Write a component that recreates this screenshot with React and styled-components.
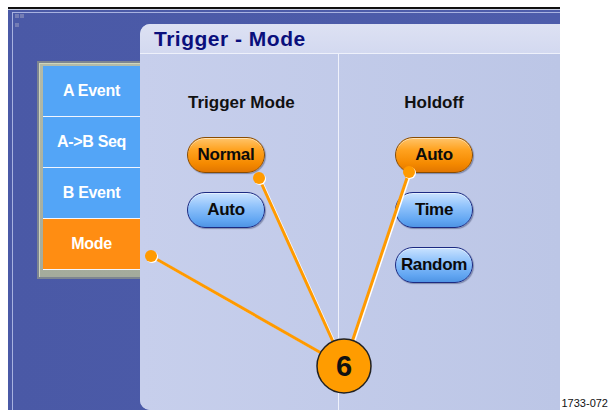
import React from 'react';
import styled, { createGlobalStyle } from 'styled-components';

const GlobalStyle = createGlobalStyle`
    html, body {
        margin: 0;
        padding: 0;
        background: #ffffff;
    }
    body {
        font-family: "Liberation Sans", Arial, sans-serif;
    }
`;

const Page = styled.div`
    position: relative;
    width: 610px;
    height: 410px;
    overflow: hidden;
    background: #ffffff;
    display: flex;
    padding: 7px 0 0 8px;
    box-sizing: border-box;
`;

const Screen = styled.div`
    width: 552px;
    height: 403px;
    box-sizing: border-box;
    border-top: 2px solid #111111;
    background: #4b5ba9;
    display: flex;
    flex-direction: column;
`;

const ScreenInner = styled.div`
    flex: 1;
    display: flex;
    flex-direction: column;
    border-top: 1px solid #c9cee0;
    padding: 2px 0 0 4px;
    background: linear-gradient(90deg, #4a59a6 0%, #4d5cab 100%);
`;

const Frame = styled.div`
    flex: 1;
    display: flex;
    align-items: stretch;
    border-left: 1px solid #a8b2e0;
    border-top: 1px solid #a8b2e0;
`;

const LeftArea = styled.div`
    width: 127px;
    display: flex;
    flex-direction: column;
    align-items: flex-start;
    padding: 1px 0 0 2px;
    box-sizing: border-box;
`;

const GridIcon = styled.div`
    display: grid;
    grid-template-columns: 4px 4px;
    grid-template-rows: 4px 4px;
    column-gap: 1px;
    row-gap: 5px;

    span {
        background: #747db4;
    }
`;

const MenuFrame = styled.div`
    margin: 34px 0 0 22px;
    width: 103px;
    box-sizing: border-box;
    padding: 3px 0 8px 4px;
    border: 2px solid #7d8591;
    border-right: none;
    background: linear-gradient(180deg, #b3baa8 0%, #a4ab9c 100%);
    box-shadow: inset 1px 1px 0 #d0d6bc;
    display: flex;
    flex-direction: column;
    gap: 1px;
`;

const MenuButton = styled.div`
    height: 50px;
    display: flex;
    align-items: center;
    justify-content: center;
    background: ${p => (p.$active ? '#ff8d12' : '#53a5f7')};
    color: #ffffff;
    font-weight: 700;
    font-size: 16px;
    letter-spacing: -0.3px;
    box-shadow: 0 1px 0 #f2f6ff;
`;

const Panel = styled.div`
    flex: 1;
    margin-top: 11px;
    border-radius: 10px 0 0 10px;
    overflow: hidden;
    display: flex;
    flex-direction: column;
    background: #c2cbe9;
`;

const PanelHeader = styled.div`
    height: 29px;
    padding-left: 14px;
    display: flex;
    align-items: center;
    background: linear-gradient(180deg, #dde1f3 0%, #d3d9f0 100%);
    border-bottom: 1px solid #eef1fb;
`;

const PanelTitle = styled.span`
    font-size: 21px;
    font-weight: 700;
    color: #0a0f7c;
    letter-spacing: 0.5px;
`;

const PanelBody = styled.div`
    flex: 1;
    display: flex;
    background: linear-gradient(90deg, #c7cfec 0%, #bcc6e6 100%);
`;

const Column = styled.div`
    width: ${p => p.$width}px;
    box-sizing: border-box;
    padding: 39px 0 0 ${p => p.$pad}px;
    border-right: ${p => (p.$divider ? '1px solid #f0f2fb' : 'none')};
    display: flex;
    flex-direction: column;
    align-items: flex-start;
`;

const Group = styled.div`
    display: flex;
    flex-direction: column;
    align-items: ${p => (p.$center ? 'center' : 'flex-start')};
    gap: 19px;
`;

const GroupLabel = styled.div`
    font-size: 17px;
    line-height: 20px;
    font-weight: 700;
    color: #111111;
    margin: 0 0 5px ${p => p.$shift || 0}px;
`;

const Pill = styled.div`
    width: 78px;
    height: 36px;
    box-sizing: border-box;
    border-radius: 18px;
    display: flex;
    align-items: center;
    justify-content: center;
    font-size: 17px;
    font-weight: 700;
    color: #0b0b0b;
    letter-spacing: -0.3px;
    border: 1.5px solid ${p => (p.$on ? '#8a4c00' : '#1c2a82')};
    background: ${p =>
        p.$on
            ? 'linear-gradient(180deg, #ffc46a 0%, #ffa21f 35%, #f58a00 75%, #e27600 100%)'
            : 'linear-gradient(180deg, #c9e2ff 0%, #8fc2fb 40%, #62a6f2 80%, #4f94e4 100%)'};
    box-shadow: 1px 1px 1px rgba(10, 20, 60, 0.35), inset 0 1px 0 rgba(255, 255, 255, 0.5);
`;

const SideColumn = styled.div`
    flex: 1;
    display: flex;
    align-items: flex-end;
    justify-content: flex-end;
    padding: 0 2px 1px 0;
`;

const FigureNo = styled.span`
    font-size: 11px;
    line-height: 12px;
    color: #111111;
`;

const Callouts = styled.svg`
    position: absolute;
    left: 0;
    top: 0;
    pointer-events: none;
`;

const hub = { x: 344, y: 366 };
const targets = [
    { x: 151, y: 256 },
    { x: 259, y: 178 },
    { x: 409, y: 172 },
];

const menu = ['A Event', 'A->B Seq', 'B Event', 'Mode'];

const App = () => {
    return (
        <Page>
            <GlobalStyle />
            <Screen>
                <ScreenInner>
                    <Frame>
                        <LeftArea>
                            <GridIcon>
                                <span />
                                <span />
                                <span />
                            </GridIcon>
                            <MenuFrame>
                                {menu.map(m => (
                                    <MenuButton key={m} $active={m === 'Mode'}>
                                        {m}
                                    </MenuButton>
                                ))}
                            </MenuFrame>
                        </LeftArea>
                        <Panel>
                            <PanelHeader>
                                <PanelTitle>Trigger - Mode</PanelTitle>
                            </PanelHeader>
                            <PanelBody>
                                <Column $width={199} $pad={47} $divider>
                                    <Group>
                                        <GroupLabel $shift={1}>Trigger Mode</GroupLabel>
                                        <Pill $on>Normal</Pill>
                                        <Pill>Auto</Pill>
                                    </Group>
                                </Column>
                                <Column $width={221} $pad={56}>
                                    <Group $center>
                                        <GroupLabel>Holdoff</GroupLabel>
                                        <Pill $on>Auto</Pill>
                                        <Pill>Time</Pill>
                                        <Pill>Random</Pill>
                                    </Group>
                                </Column>
                            </PanelBody>
                        </Panel>
                    </Frame>
                </ScreenInner>
            </Screen>
            <SideColumn>
                <FigureNo>1733-072</FigureNo>
            </SideColumn>

            <Callouts width="610" height="410" viewBox="0 0 610 410">
                {targets.map((t, i) => (
                    <g key={i}>
                        <line x1={hub.x + 1.5} y1={hub.y + 1} x2={t.x + 1.5} y2={t.y + 1} stroke="#ffffff" strokeWidth="2.5" />
                        <line x1={hub.x} y1={hub.y} x2={t.x} y2={t.y} stroke="#ff9a00" strokeWidth="3" />
                        <circle cx={t.x + 1} cy={t.y + 1} r="6" fill="#ffffff" />
                        <circle cx={t.x} cy={t.y} r="6" fill="#ff9a00" />
                    </g>
                ))}
                <circle cx={hub.x} cy={hub.y} r="27" fill="#ff9c00" stroke="#222222" strokeWidth="1.5" />
                <text
                    x={hub.x}
                    y={hub.y + 10}
                    textAnchor="middle"
                    fontFamily="Liberation Sans, Arial, sans-serif"
                    fontWeight="700"
                    fontSize="29"
                    fill="#111111"
                >
                    6
                </text>
            </Callouts>
        </Page>
    );
};

export default App;
